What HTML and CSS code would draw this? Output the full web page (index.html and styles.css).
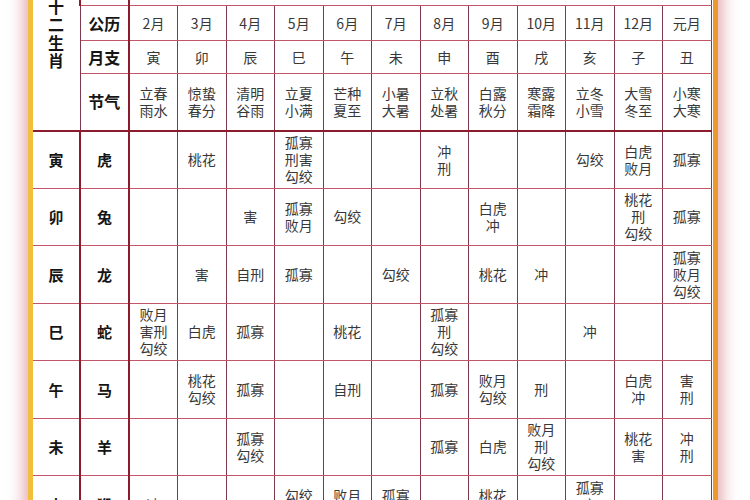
FILE: index.html
```html
<!DOCTYPE html>
<html lang="zh">
<head>
<meta charset="utf-8">
<title>十二生肖月令表</title>
<link rel="stylesheet" href="styles.css">
</head>
<body>
<div class="frame">
<table class="chart">
<colgroup>
<col class="c-branch"><col class="c-head">
<col class="c-m"><col class="c-m"><col class="c-m"><col class="c-m"><col class="c-m"><col class="c-m">
<col class="c-m"><col class="c-m"><col class="c-m"><col class="c-m"><col class="c-m"><col class="c-m">
</colgroup>
<tr class="r-title">
<td class="zodiac-head" rowspan="4"><span>十</span><span>二</span><span>生</span><span>肖</span></td>
<td class="head"></td>
<td colspan="12" class="title">月令</td>
</tr>
<tr class="r-month">
<th class="head">公历</th>
<td>2月</td><td>3月</td><td>4月</td><td>5月</td><td>6月</td><td>7月</td><td>8月</td><td>9月</td><td>10月</td><td>11月</td><td>12月</td><td>元月</td>
</tr>
<tr class="r-branch">
<th class="head">月支</th>
<td>寅</td><td>卯</td><td>辰</td><td>巳</td><td>午</td><td>未</td><td>申</td><td>酉</td><td>戌</td><td>亥</td><td>子</td><td>丑</td>
</tr>
<tr class="r-term">
<th class="head">节气</th>
<td>立春<br>雨水</td><td>惊蛰<br>春分</td><td>清明<br>谷雨</td><td>立夏<br>小满</td><td>芒种<br>夏至</td><td>小暑<br>大暑</td><td>立秋<br>处暑</td><td>白露<br>秋分</td><td>寒露<br>霜降</td><td>立冬<br>小雪</td><td>大雪<br>冬至</td><td>小寒<br>大寒</td>
</tr>
<tr class="r-data first">
<th class="br">寅</th><th class="head an">虎</th>
<td></td><td>桃花</td><td></td><td>孤寡<br>刑害<br>勾绞</td><td></td><td></td><td>冲<br>刑</td><td></td><td></td><td>勾绞</td><td>白虎<br>败月</td><td>孤寡</td>
</tr>
<tr class="r-data">
<th class="br">卯</th><th class="head an">兔</th>
<td></td><td></td><td>害</td><td>孤寡<br>败月</td><td>勾绞</td><td></td><td></td><td>白虎<br>冲</td><td></td><td></td><td>桃花<br>刑<br>勾绞</td><td>孤寡</td>
</tr>
<tr class="r-data">
<th class="br">辰</th><th class="head an">龙</th>
<td></td><td>害</td><td>自刑</td><td>孤寡</td><td></td><td>勾绞</td><td></td><td>桃花</td><td>冲</td><td></td><td></td><td>孤寡<br>败月<br>勾绞</td>
</tr>
<tr class="r-data">
<th class="br">巳</th><th class="head an">蛇</th>
<td>败月<br>害刑<br>勾绞</td><td>白虎</td><td>孤寡</td><td></td><td>桃花</td><td></td><td>孤寡<br>刑<br>勾绞</td><td></td><td></td><td>冲</td><td></td><td></td>
</tr>
<tr class="r-data">
<th class="br">午</th><th class="head an">马</th>
<td></td><td>桃花<br>勾绞</td><td>孤寡</td><td></td><td>自刑</td><td></td><td>孤寡</td><td>败月<br>勾绞</td><td>刑</td><td></td><td>白虎<br>冲</td><td>害<br>刑</td>
</tr>
<tr class="r-data">
<th class="br">未</th><th class="head an">羊</th>
<td></td><td></td><td>孤寡<br>勾绞</td><td></td><td></td><td></td><td>孤寡</td><td>白虎</td><td>败月<br>刑<br>勾绞</td><td></td><td>桃花<br>害</td><td>冲<br>刑</td>
</tr>
<tr class="r-data">
<th class="br">申</th><th class="head an">猴</th>
<td>冲</td><td></td><td></td><td>勾绞<br>害</td><td>败月<br>刑</td><td>孤寡<br>害</td><td></td><td>桃花<br>冲</td><td></td><td>孤寡<br>害<br>勾绞</td><td></td><td></td>
</tr>
</table>
</div>
</body>
</html>
```

FILE: styles.css
```css
html, body {
  margin: 0;
  padding: 0;
  background: #ffffff;
  overflow: hidden;
}

body {
  font-family: "Noto Sans CJK SC", "Liberation Sans", sans-serif;
}

.frame {
  margin: -31px 0 0 28px;
  width: 678px;
  padding-right: 2px;
  border-left: 5px solid #f2be3e;
  border-right: 5px solid #ec9830;
  background: #ffffff;
  box-shadow: 0 0 16px 3px rgba(205, 90, 100, 0.58);
}

.chart {
  border-collapse: collapse;
  table-layout: fixed;
  width: 678px;
}

.c-branch { width: 47px; }
.c-head { width: 49px; }
.c-m { width: 48.5px; }

.chart td,
.chart th {
  border-top: 1px solid #c25569;
  border-bottom: 1px solid #c25569;
  border-left: 1px solid #7d3a4c;
  border-right: 1px solid #7d3a4c;
  padding: 0;
  text-align: center;
  vertical-align: middle;
  font-size: 14px;
  line-height: 17px;
  font-weight: 400;
  color: #383838;
}

.chart tr > :first-child {
  border-left: none;
}

.chart .head {
  border-left: 2px solid #8c1b2e;
  border-right: 2px solid #8c1b2e;
  font-weight: 700;
  font-size: 16px;
  color: #151515;
}

.chart .title {
  vertical-align: top;
  color: #151515;
  font-weight: 700;
  font-size: 14px;
  line-height: 14px;
}

.r-title { height: 36px; }
.r-month { height: 35px; }
.r-branch { height: 33px; }
.r-term { height: 57px; }
.r-data { height: 57.5px; }

.r-term td,
.r-term th {
  border-bottom: 2px solid #8c1b2e;
}

.chart .zodiac-head {
  vertical-align: top;
  padding-top: 27px;
  border-bottom: 2px solid #8c1b2e;
}

.zodiac-head span {
  display: block;
  font-size: 16px;
  line-height: 18px;
  font-weight: 700;
  color: #151515;
}

.chart .br,
.chart .an {
  font-weight: 700;
  font-size: 15px;
  color: #151515;
}
```
